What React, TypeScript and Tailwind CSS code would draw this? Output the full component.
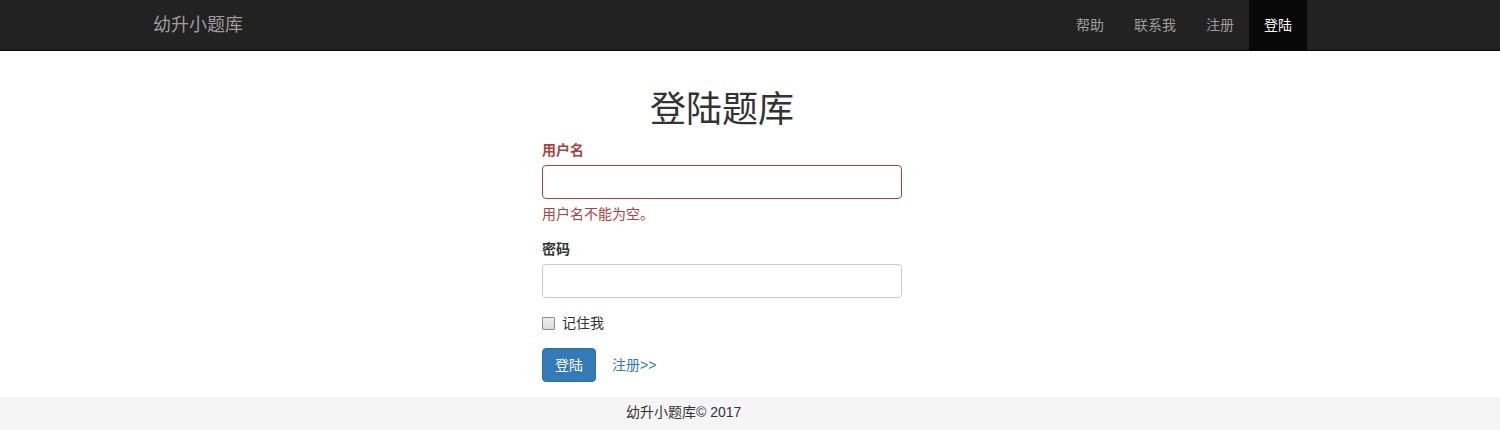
import React from 'react'

const font = { fontFamily: '"Liberation Sans", "Noto Sans CJK SC", sans-serif' }

const NavBar = () => {
  return (
    <div className="w-full h-[51px] bg-[#222222] border-b border-[#080808] flex justify-between">
      <div className="pl-[153px] flex items-center h-[50px]">
        <span className="text-[18px] text-[#9d9d9d]">幼升小题库</span>
      </div>
      <div className="flex h-[50px] pr-[193px] text-[14px]">
        <a className="px-[15px] flex items-center text-[#9d9d9d]">帮助</a>
        <a className="px-[15px] flex items-center text-[#9d9d9d]">联系我</a>
        <a className="px-[15px] flex items-center text-[#9d9d9d]">注册</a>
        <a className="px-[15px] flex items-center text-white bg-[#080808]">登陆</a>
      </div>
    </div>
  )
}

const App = () => {
  return (
    <div className="w-[1500px] h-[430px] bg-white text-[#333333] text-[14px] overflow-hidden" style={font}>
      <NavBar />
      <div className="pl-[542px] pt-[39px]">
        <div className="w-[360px]">
          <h2 className="text-[36px] leading-[40px] text-center font-normal mb-[10px]">登陆题库</h2>

          <div className="mb-[15px]">
            <label className="block font-bold leading-[20px] mb-[5px] text-[#a94442]">用户名</label>
            <input className="block w-full h-[34px] rounded-[4px] border border-[#a94442] px-3 outline-none" />
            <p className="mt-[5px] leading-[20px] text-[#a94442]">用户名不能为空。</p>
          </div>

          <div className="mb-[15px]">
            <label className="block font-bold leading-[20px] mb-[5px]">密码</label>
            <input type="password" className="block w-full h-[34px] rounded-[4px] border border-[#cccccc] px-3 outline-none" />
          </div>

          <div className="flex items-center h-[20px]">
            <span className="w-[13px] h-[13px] border border-[#8f8f8f] bg-gradient-to-b from-[#ededed] to-[#dcdcdc] rounded-[1px]"></span>
            <span className="ml-[7px]">记住我</span>
          </div>

          <div className="flex items-center mt-[15px]">
            <button className="h-[34px] px-[12px] rounded-[4px] bg-[#337ab7] border border-[#2e6da4] text-white">登陆</button>
            <a className="ml-[16px] text-[#337ab7]">注册&gt;&gt;</a>
          </div>
        </div>
      </div>
      <div className="mt-[15px] h-[40px] bg-[#f5f5f5] flex items-start">
        <p className="pl-[626px] pt-[5px] leading-[20px]">幼升小题库© 2017</p>
      </div>
    </div>
  )
}

export default App
